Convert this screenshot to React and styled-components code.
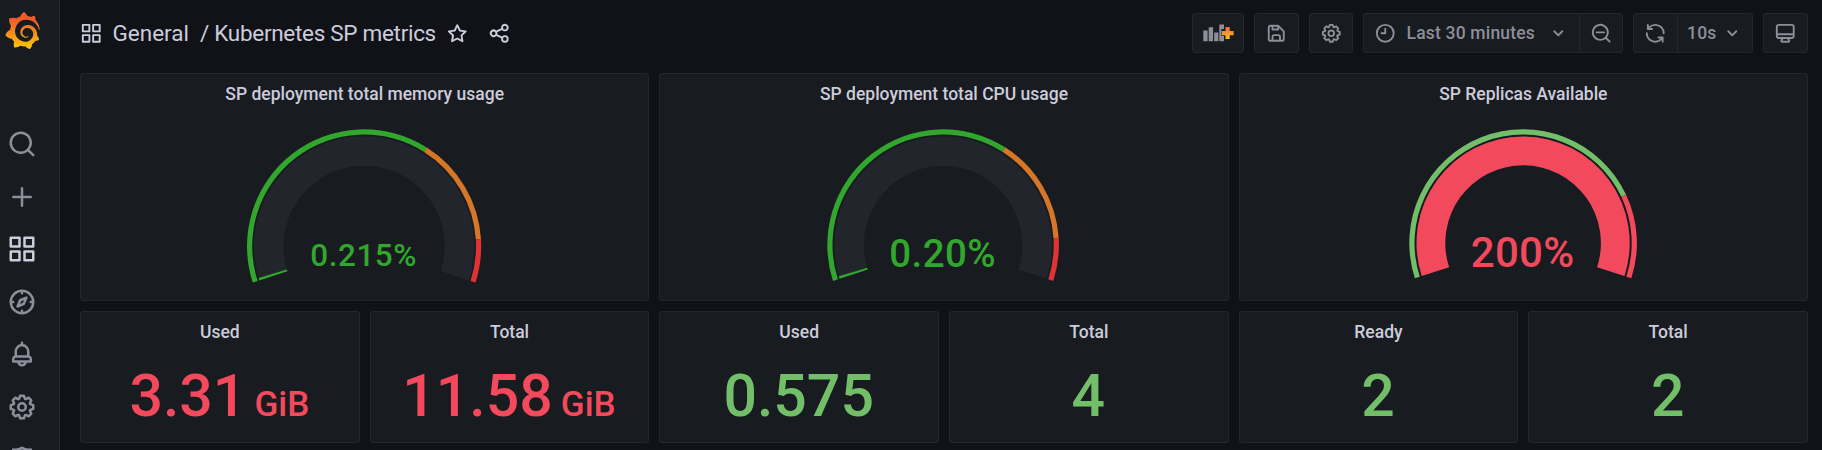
import React from "react";
import styled, { createGlobalStyle } from "styled-components";
import { SiGrafana } from "react-icons/si";

const ICONS = {
  apps: "M10,13H3a1,1,0,0,0-1,1v7a1,1,0,0,0,1,1h7a1,1,0,0,0,1-1V14A1,1,0,0,0,10,13ZM9,20H4V15H9ZM21,2H14a1,1,0,0,0-1,1v7a1,1,0,0,0,1,1h7a1,1,0,0,0,1-1V3A1,1,0,0,0,21,2ZM20,9H15V4h5Zm1,4H14a1,1,0,0,0-1,1v7a1,1,0,0,0,1,1h7a1,1,0,0,0,1-1V14A1,1,0,0,0,21,13Zm-1,7H15V15h5ZM10,2H3A1,1,0,0,0,2,3v7a1,1,0,0,0,1,1h7a1,1,0,0,0,1-1V3A1,1,0,0,0,10,2ZM9,9H4V4H9Z",
  search: "M21.71,20.29,18,16.61A9,9,0,1,0,16.61,18l3.68,3.68a1,1,0,0,0,1.42,0A1,1,0,0,0,21.71,20.29ZM11,18a7,7,0,1,1,7-7A7,7,0,0,1,11,18Z",
  plus: "M19,11H13V5a1,1,0,0,0-2,0v6H5a1,1,0,0,0,0,2h6v6a1,1,0,0,0,2,0V13h6a1,1,0,0,0,0-2Z",
  compass: "M12,2A10,10,0,1,0,22,12,10,10,0,0,0,12,2Zm1,17.93V19a1,1,0,0,0-2,0v.93A8,8,0,0,1,4.07,13H5a1,1,0,0,0,0-2H4.07A8,8,0,0,1,11,4.07V5a1,1,0,0,0,2,0V4.07A8,8,0,0,1,19.93,11H19a1,1,0,0,0,0,2h.93A8,8,0,0,1,13,19.93ZM15.14,7.55l-5,2.12a1,1,0,0,0-.52.52l-2.12,5a1,1,0,0,0,.21,1.1,1,1,0,0,0,.7.3.93.93,0,0,0,.4-.09l5-2.12a1,1,0,0,0,.52-.52l2.12-5a1,1,0,0,0-1.31-1.31Zm-2.49,5.1-2.28,1,1-2.28,2.28-1Z",
  bell: "M18,13.18V10a6,6,0,0,0-5-5.91V3a1,1,0,0,0-2,0V4.09A6,6,0,0,0,6,10v3.18A3,3,0,0,0,4,16v2a1,1,0,0,0,1,1H8.14a4,4,0,0,0,7.72,0H19a1,1,0,0,0,1-1V16A3,3,0,0,0,18,13.18ZM8,10a4,4,0,0,1,8,0v3H8Zm4,10a2,2,0,0,1-1.72-1h3.44A2,2,0,0,1,12,20Zm6-3H6V16a1,1,0,0,1,1-1H17a1,1,0,0,1,1,1Z",
  cog: "M21.32,9.55l-1.89-.63.89-1.78A1,1,0,0,0,20.13,6L18,3.87a1,1,0,0,0-1.15-.19l-1.78.89-.63-1.89A1,1,0,0,0,13.5,2h-3a1,1,0,0,0-.95.68L8.92,4.57,7.14,3.68A1,1,0,0,0,6,3.87L3.87,6a1,1,0,0,0-.19,1.15l.89,1.78-1.89.63A1,1,0,0,0,2,10.5v3a1,1,0,0,0,.68.95l1.89.63-.89,1.78A1,1,0,0,0,3.87,18L6,20.13a1,1,0,0,0,1.15.19l1.78-.89.63,1.89a1,1,0,0,0,.95.68h3a1,1,0,0,0,.95-.68l.63-1.89,1.78.89A1,1,0,0,0,18,20.13L20.13,18a1,1,0,0,0,.19-1.15l-.89-1.78,1.89-.63A1,1,0,0,0,22,13.5v-3A1,1,0,0,0,21.32,9.55ZM20,12.78l-1.2.4A2,2,0,0,0,17.64,16l.57,1.14-1.1,1.1L16,17.64a2,2,0,0,0-2.79,1.16l-.4,1.2H11.22l-.4-1.2A2,2,0,0,0,8,17.64l-1.14.57-1.1-1.1L6.36,16A2,2,0,0,0,5.2,13.18L4,12.78V11.22l1.2-.4A2,2,0,0,0,6.36,8L5.79,6.89l1.1-1.1L8,6.36A2,2,0,0,0,10.82,5.2l.4-1.2h1.56l.4,1.2A2,2,0,0,0,16,6.36l1.14-.57,1.1,1.1L17.64,8a2,2,0,0,0,1.16,2.79l1.2.4ZM12,8a4,4,0,1,0,4,4A4,4,0,0,0,12,8Zm0,6a2,2,0,1,1,2-2A2,2,0,0,1,12,14Z",
  shield: "M19.63,3.65a1,1,0,0,0-.84-.2,8,8,0,0,1-6.22-1.27,1,1,0,0,0-1.14,0A8,8,0,0,1,5.21,3.45a1,1,0,0,0-.84.2A1,1,0,0,0,4,4.43v7.45a9,9,0,0,0,3.77,7.33l3.65,2.6a1,1,0,0,0,1.16,0l3.65-2.6A9,9,0,0,0,20,11.88V4.43A1,1,0,0,0,19.63,3.65ZM18,11.88a7,7,0,0,1-2.93,5.7L12,19.77,8.93,17.58A7,7,0,0,1,6,11.88V5.58a10,10,0,0,0,6-1.39,10,10,0,0,0,6,1.39Z",
  save: "m20.71 9.29-6-6a1 1 0 0 0-.32-.21A1.09 1.09 0 0 0 14 3H6a3 3 0 0 0-3 3v12a3 3 0 0 0 3 3h12a3 3 0 0 0 3-3v-8a1 1 0 0 0-.29-.71ZM9 5h4v2H9Zm6 14H9v-3a1 1 0 0 1 1-1h4a1 1 0 0 1 1 1Zm4-1a1 1 0 0 1-1 1h-1v-3a3 3 0 0 0-3-3h-4a3 3 0 0 0-3 3v3H6a1 1 0 0 1-1-1V6a1 1 0 0 1 1-1h1v3a1 1 0 0 0 1 1h6a1 1 0 0 0 1-1V6.41l4 4Z",
  star: "M22,9.67A1,1,0,0,0,21.14,9l-5.69-.83L12.9,3a1,1,0,0,0-1.8,0L8.55,8.16,2.86,9a1,1,0,0,0-.81.68,1,1,0,0,0,.25,1l4.13,4-1,5.68A1,1,0,0,0,6.9,21.44L12,18.77l5.1,2.67a.93.93,0,0,0,.46.12,1,1,0,0,0,.59-.19,1,1,0,0,0,.4-1l-1-5.68,4.13-4A1,1,0,0,0,22,9.67Zm-6.15,4a1,1,0,0,0-.29.88l.72,4.2-3.76-2a1.06,1.06,0,0,0-.94,0l-3.76,2,.72-4.2a1,1,0,0,0-.29-.88l-3-3,4.21-.61a1,1,0,0,0,.76-.55L12,5.7l1.88,3.82a1,1,0,0,0,.76.55l4.21.61Z",
  share: "M18,14a4,4,0,0,0-3.08,1.48l-5.1-2.35a3.64,3.64,0,0,0,0-2.26l5.1-2.35A4,4,0,1,0,14,6a4.17,4.17,0,0,0,.07.71L8.79,9.14a4,4,0,1,0,0,5.72l5.28,2.43A4.17,4.17,0,0,0,14,18a4,4,0,1,0,4-4ZM18,4a2,2,0,1,1-2,2A2,2,0,0,1,18,4ZM6,14a2,2,0,1,1,2-2A2,2,0,0,1,6,14Zm12,6a2,2,0,1,1,2-2A2,2,0,0,1,18,20Z",
  clock: "M12,2A10,10,0,1,0,22,12,10,10,0,0,0,12,2Zm0,18a8,8,0,1,1,8-8A8,8,0,0,1,12,20ZM12,6a1,1,0,0,0-1,1v4H8a1,1,0,0,0,0,2h4a1,1,0,0,0,1-1V7A1,1,0,0,0,12,6Z",
  zoomOut: "M21.71,20.29,18,16.61A9,9,0,1,0,16.61,18l3.68,3.68a1,1,0,0,0,1.42,0A1,1,0,0,0,21.71,20.29ZM11,18a7,7,0,1,1,7-7A7,7,0,0,1,11,18Zm4-8H7a1,1,0,0,0,0,2h8a1,1,0,0,0,0-2Z",
  angleDown: "M17,9.17a1,1,0,0,0-1.41,0L12,12.71,8.46,9.17a1,1,0,0,0-1.41,0,1,1,0,0,0,0,1.42l4.24,4.24a1,1,0,0,0,1.42,0L17,10.59A1,1,0,0,0,17,9.17Z",
  sync: "M19.91,15.51H15.38a1,1,0,0,0,0,2h2.4A8,8,0,0,1,4,12a1,1,0,1,0-2,0,10,10,0,0,0,16.88,7.23V21a1,1,0,0,0,2,0V16.5A1,1,0,0,0,19.91,15.51ZM12,2A10,10,0,0,0,5.12,4.77V3a1,1,0,0,0-2,0V7.5a1,1,0,0,0,1,1h4.5a1,1,0,0,0,0-2H6.22A8,8,0,0,1,20,12a1,1,0,0,0,2,0A10,10,0,0,0,12,2Z",
  monitor: "M19,2H5A3,3,0,0,0,2,5V15a3,3,0,0,0,3,3H7.64l-.58,1a2,2,0,0,0,0,2,2,2,0,0,0,1.75,1h6.46A2,2,0,0,0,17,21a2,2,0,0,0,0-2l-.59-1H19a3,3,0,0,0,3-3V5A3,3,0,0,0,19,2ZM8.77,20,10,18H14l1.2,2ZM20,15a1,1,0,0,1-1,1H5a1,1,0,0,1-1-1V14H20Zm0-3H4V5A1,1,0,0,1,5,4H19a1,1,0,0,1,1,1Z",
};

const COLORS = {
  text: "#ccccdc",
  muted: "#8e8e9a",
  canvas: "#111217",
  panel: "#181b1f",
  border: "#25272c",
  green: "#73bf69",
  darkGreen: "#31a72d",
  orange: "#d67627",
  darkRed: "#df3334",
  red: "#f2495c",
  track: "#22252b",
};

const GlobalStyle = createGlobalStyle`
  * { box-sizing: border-box; }
  body {
    margin: 0;
    background: ${COLORS.canvas};
    color: ${COLORS.text};
    font-family: Roboto, "Liberation Sans", sans-serif;
    overflow: hidden;
  }
`;

const Page = styled.div`
  display: flex;
  height: 450px;
  overflow: hidden;
`;

const Sidebar = styled.nav`
  display: flex;
  flex-direction: column;
  flex: none;
  width: 60px;
  padding-right: 15px;
  background: ${COLORS.panel};
  border-right: 1px solid ${COLORS.border};
`;

const LogoLink = styled.div`
  display: flex;
  justify-content: center;
  flex: none;
  height: 118px;
  padding-top: 12px;

  svg path { fill: url(#logo-gradient); }
`;

const NavItem = styled.div`
  display: flex;
  align-items: center;
  justify-content: center;
  flex: none;
  height: 52.5px;
  color: ${(p) => (p.$active ? COLORS.text : COLORS.muted)};
`;

const Main = styled.main`
  flex: 1;
  display: flex;
  flex-direction: column;
  padding: 0 14px 0 20px;
`;

const Toolbar = styled.header`
  display: flex;
  align-items: center;
  justify-content: space-between;
  height: 73px;
  padding-bottom: 7px;
`;

const Breadcrumb = styled.div`
  display: flex;
  align-items: center;
  font-size: 22.5px;
  line-height: 30px;
  white-space: pre;
`;

const Crumb = styled.span`
  margin-left: ${(p) => p.$gap}px;
  letter-spacing: ${(p) => p.$tracking || 0}px;
`;

const HeaderIcon = styled.span`
  display: flex;
  margin-left: ${(p) => p.$gap || 0}px;
`;

const Actions = styled.div`
  display: flex;
  gap: 10px;
`;

const ButtonGroup = styled.div`
  display: flex;
  height: 40px;
  background: ${COLORS.panel};
  border: 1px solid ${COLORS.border};
  border-radius: 3px;
  color: ${COLORS.muted};
`;

const ToolButton = styled.button`
  display: flex;
  align-items: center;
  justify-content: ${(p) => p.$align || "center"};
  width: ${(p) => p.$width}px;
  padding: 0 ${(p) => p.$pad || 0}px;
  border: 0;
  background: none;
  color: inherit;
  font: 500 17.5px Roboto, "Liberation Sans", sans-serif;
  letter-spacing: 0.19px;
  white-space: nowrap;

  & + & { border-left: 1px solid ${COLORS.border}; }
`;

const ButtonLabel = styled.span`
  flex: 1;
  text-align: left;
  margin-left: ${(p) => p.$gap || 0}px;
`;

const Dashboard = styled.section`
  display: grid;
  grid-template-columns: repeat(6, 1fr);
  grid-template-rows: 228px 132px;
  gap: 10px;
`;

const Panel = styled.article`
  grid-column: span ${(p) => p.$span};
  display: flex;
  flex-direction: column;
  min-width: 0;
  background: ${COLORS.panel};
  border: 1px solid ${COLORS.border};
  border-radius: 3px;
`;

const PanelTitle = styled.h2`
  margin: 0;
  padding-top: 1px;
  flex: none;
  height: 40px;
  font-size: 17.5px;
  line-height: 39px;
  font-weight: 500;
  text-align: center;
`;

const GaugeSvg = styled.svg`
  display: block;
  width: 100%;
  height: 186px;
`;

const GaugeValue = styled.text`
  font-family: Roboto, "Liberation Sans", sans-serif;
  font-weight: 500;
  font-size: ${(p) => p.$size}px;
  letter-spacing: ${(p) => p.$tracking}px;
  text-anchor: middle;
  fill: ${(p) => p.$color};
`;

const StatValue = styled.div`
  display: flex;
  align-items: baseline;
  justify-content: center;
  padding-right: 1px;
  font-size: 59px;
  line-height: 88px;
  font-weight: 500;
  color: ${(p) => p.$color};
`;

const StatUnit = styled.span`
  font-size: 35px;
  margin-left: 8px;
`;

function Icon({ name, size = 22.5 }) {
  return (
    <svg width={size} height={size} viewBox="0 0 24 24" fill="currentColor" aria-hidden="true">
      <path d={ICONS[name]} />
    </svg>
  );
}

function AddPanelIcon() {
  return (
    <svg width="32" height="24" viewBox="0 0 32 24" aria-hidden="true">
      <defs>
        <linearGradient id="plus-gradient" x1="0" y1="0" x2="0" y2="1">
          <stop offset="0" stopColor="#f2693a" />
          <stop offset="1" stopColor="#fcc218" />
        </linearGradient>
      </defs>
      <path fill="currentColor" d="M1.300 9.500h4.300v10.800h-4.300zM6.700 6.300h4.400v14h-4.400zM12.200 11.500h4.200v8.800h-4.200zM17.300 3.600h4.700v4.500h-2.600v7h2.600v5.200h-4.700z" />
      <path fill="url(#plus-gradient)" d="M23.500 6h4.200v4h3.900v4.200h-3.900v3.900h-4.200v-3.900h-3.700v-4.200h3.700z" />
    </svg>
  );
}

const SWEEP_START = 162;
const SWEEP = 216;

function arcBand(outer, inner, from, to) {
  const at = (r, t) => {
    const a = ((SWEEP_START + SWEEP * t) * Math.PI) / 180;
    return `${(r * Math.cos(a)).toFixed(2)} ${(r * Math.sin(a)).toFixed(2)}`;
  };
  const large = (to - from) * SWEEP > 180 ? 1 : 0;
  return `M${at(outer, from)}A${outer} ${outer} 0 ${large} 1 ${at(outer, to)}L${at(inner, to)}A${inner} ${inner} 0 ${large} 0 ${at(inner, from)}Z`;
}

function Gauge({ radius, band, hole, value, label, labelSize, labelY, tracking, color, thresholds }) {
  return (
    <GaugeSvg viewBox="-283.600 0 567.330 186">
      <g transform={`translate(-0.5 ${15.3 + radius})`}>
        <path d={arcBand(band, hole, 0, 1)} fill={COLORS.track} />
        <path d={arcBand(band, hole, 0, value)} fill={color} />
        {thresholds.map((t) => (
          <path key={t.from} d={arcBand(radius, radius - 5.2, t.from, t.to)} fill={t.color} />
        ))}
      </g>
      <GaugeValue x="-1" y={labelY} $size={labelSize} $tracking={tracking} $color={color}>
        {label}
      </GaugeValue>
    </GaugeSvg>
  );
}

const USAGE_THRESHOLDS = [
  { from: 0, to: 0.65, color: COLORS.darkGreen },
  { from: 0.65, to: 0.9, color: COLORS.orange },
  { from: 0.9, to: 1, color: COLORS.darkRed },
];

const REPLICA_THRESHOLDS = [
  { from: 0, to: 0.8, color: COLORS.green },
  { from: 0.8, to: 1, color: COLORS.red },
];

const GAUGES = [
  { title: "SP deployment total memory usage", radius: 117.1, band: 110.2, hole: 80.6, value: 0.006, label: "0.215%", labelSize: 31.5, labelY: 151.7, tracking: 0.5, color: COLORS.darkGreen, thresholds: USAGE_THRESHOLDS },
  { title: "SP deployment total CPU usage", radius: 115.8, band: 108.8, hole: 79.2, value: 0.006, label: "0.20%", labelSize: 38.5, labelY: 153.4, tracking: 0.4, color: COLORS.darkGreen, thresholds: USAGE_THRESHOLDS },
  { title: "SP Replicas Available", radius: 113.8, band: 106.6, hole: 77.8, value: 1, label: "200%", labelSize: 42, labelY: 153.4, tracking: 0.3, color: COLORS.red, thresholds: REPLICA_THRESHOLDS },
];

const STATS = [
  { title: "Used", value: "3.31", unit: "GiB", color: COLORS.red },
  { title: "Total", value: "11.58", unit: "GiB", color: COLORS.red },
  { title: "Used", value: "0.575", color: COLORS.green },
  { title: "Total", value: "4", color: COLORS.green },
  { title: "Ready", value: "2", color: COLORS.green },
  { title: "Total", value: "2", color: COLORS.green },
];

const NAV = ["search", "plus", "apps", "compass", "bell", "cog", "shield"];

export default function App() {
  return (
    <>
      <GlobalStyle />
      <Page>
        <Sidebar>
          <LogoLink>
            <svg width="0" height="0" aria-hidden="true">
              <defs>
                <linearGradient id="logo-gradient" x1="0" y1="0" x2="0" y2="1">
                  <stop offset="0.2" stopColor="#f05a28" />
                  <stop offset="1" stopColor="#fbca0a" />
                </linearGradient>
              </defs>
            </svg>
            <SiGrafana size={37} />
          </LogoLink>
          {NAV.map((name) => (
            <NavItem key={name} $active={name === "apps"}>
              <Icon name={name} size={30} />
            </NavItem>
          ))}
        </Sidebar>
        <Main>
          <Toolbar>
            <Breadcrumb>
              <HeaderIcon><Icon name="apps" /></HeaderIcon>
              <Crumb $gap={10}>General</Crumb>
              <Crumb $gap={11} $tracking={-0.3}>/ Kubernetes SP metrics</Crumb>
              <HeaderIcon $gap={10}><Icon name="star" /></HeaderIcon>
              <HeaderIcon $gap={19.5}><Icon name="share" /></HeaderIcon>
            </Breadcrumb>
            <Actions>
              <ButtonGroup><ToolButton $width={50}><AddPanelIcon /></ToolButton></ButtonGroup>
              <ButtonGroup><ToolButton $width={43}><Icon name="save" /></ToolButton></ButtonGroup>
              <ButtonGroup><ToolButton $width={42}><Icon name="cog" /></ToolButton></ButtonGroup>
              <ButtonGroup>
                <ToolButton $width={215} $pad={10}>
                  <Icon name="clock" />
                  <ButtonLabel $gap={10}>Last 30 minutes</ButtonLabel>
                  <Icon name="angleDown" />
                </ToolButton>
                <ToolButton $width={43}><Icon name="zoomOut" /></ToolButton>
              </ButtonGroup>
              <ButtonGroup>
                <ToolButton $width={43}><Icon name="sync" /></ToolButton>
                <ToolButton $width={75} $pad={9}>
                  <ButtonLabel>10s</ButtonLabel>
                  <Icon name="angleDown" />
                </ToolButton>
              </ButtonGroup>
              <ButtonGroup><ToolButton $width={43}><Icon name="monitor" /></ToolButton></ButtonGroup>
            </Actions>
          </Toolbar>
          <Dashboard>
            {GAUGES.map(({ title, ...gauge }) => (
              <Panel key={title} $span={2}>
                <PanelTitle>{title}</PanelTitle>
                <Gauge {...gauge} />
              </Panel>
            ))}
            {STATS.map((stat, i) => (
              <Panel key={i} $span={1}>
                <PanelTitle>{stat.title}</PanelTitle>
                <StatValue $color={stat.color}>
                  {stat.value}
                  {stat.unit && <StatUnit>{stat.unit}</StatUnit>}
                </StatValue>
              </Panel>
            ))}
          </Dashboard>
        </Main>
      </Page>
    </>
  );
}
